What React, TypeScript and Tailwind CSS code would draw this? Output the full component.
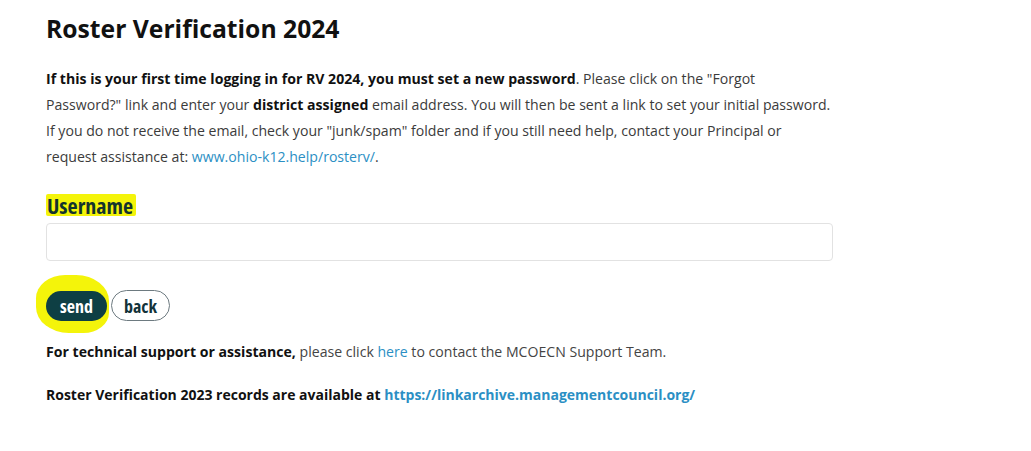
import React from "react";

export default function App() {
  const body = { fontFamily: '"Open Sans", "Noto Sans", sans-serif' };
  const cond = { fontFamily: '"Open Sans", "Noto Sans", sans-serif', fontStretch: "75%" } as React.CSSProperties;
  const semi = { fontFamily: '"Open Sans", "Noto Sans", sans-serif', fontStretch: "96%" } as React.CSSProperties;
  const semi2 = { fontFamily: '"Open Sans", "Noto Sans", sans-serif', fontStretch: "97%" } as React.CSSProperties;
  return (
    <div className="w-[1031px] h-[451px] bg-white overflow-hidden">
      <div className="pl-[46px] pt-[14px] w-[860px]">
        <h1 className="text-[24.7px] font-bold text-[#111] leading-[30px]" style={body}>
          Roster Verification 2024
        </h1>
        <p className="mt-[21.5px] text-[14.1px] leading-[26.3px] text-[#3b3b3b] whitespace-nowrap" style={body}>
          <b className="text-[#111]">If this is your first time logging in for RV 2024, you must set a new password</b>
          . Please click on the "Forgot
          <br />
          Password?" link and enter your <b className="text-[#111]">district assigned</b> email address. You will then
          be sent a link to set your initial password.
          <br />
          If you do not receive the email, check your "junk/spam" folder and if you still need help, contact your
          Principal or
          <br />
          request assistance at: <span className="text-[#2b8fc4]">www.ohio-k12.help/rosterv/</span>.
        </p>
        <div className="mt-[23.5px]">
          <span
            className="inline-block bg-[#f4f40a] text-[#13332e] font-bold text-[22px] leading-[22px] pl-[1px] pr-[3px] rounded-[2px]"
            style={cond}
          >
            Username
          </span>
        </div>
        <input
          className="block mt-[3px] w-[787px] h-[38px] border border-[#e2e2e2] rounded-[4px] bg-white"
          type="text"
        />
        <div className="relative mt-[29px] flex items-center gap-[4px]">
          <div className="absolute left-[-10px] top-[-15px] w-[73px] h-[58px] bg-[#f4f40a] rounded-[40%_45%_35%_45%]" />
          <button
            className="relative w-[61px] h-[30px] rounded-full bg-[#0e3f44] text-white font-bold text-[18px] leading-none"
            style={cond}
          >
            send
          </button>
          <button
            className="relative w-[59px] h-[31px] rounded-full bg-white border border-[#6d7a80] text-[#13333a] font-bold text-[18px] leading-none"
            style={cond}
          >
            back
          </button>
        </div>
        <p className="mt-[21px] text-[14.1px] leading-[20px] text-[#444] whitespace-nowrap" style={semi}>
          <b className="text-[#111]">For technical support or assistance,</b> please click{" "}
          <span className="text-[#2b8fc4]">here</span> to contact the MCOECN Support Team.
        </p>
        <p className="mt-[23px] text-[14px] leading-[20px] text-[#111] font-bold whitespace-nowrap" style={semi2}>
          Roster Verification 2023 records are available at{" "}
          <span className="text-[#2b8fc4]">https://linkarchive.managementcouncil.org/</span>
        </p>
      </div>
    </div>
  );
}
